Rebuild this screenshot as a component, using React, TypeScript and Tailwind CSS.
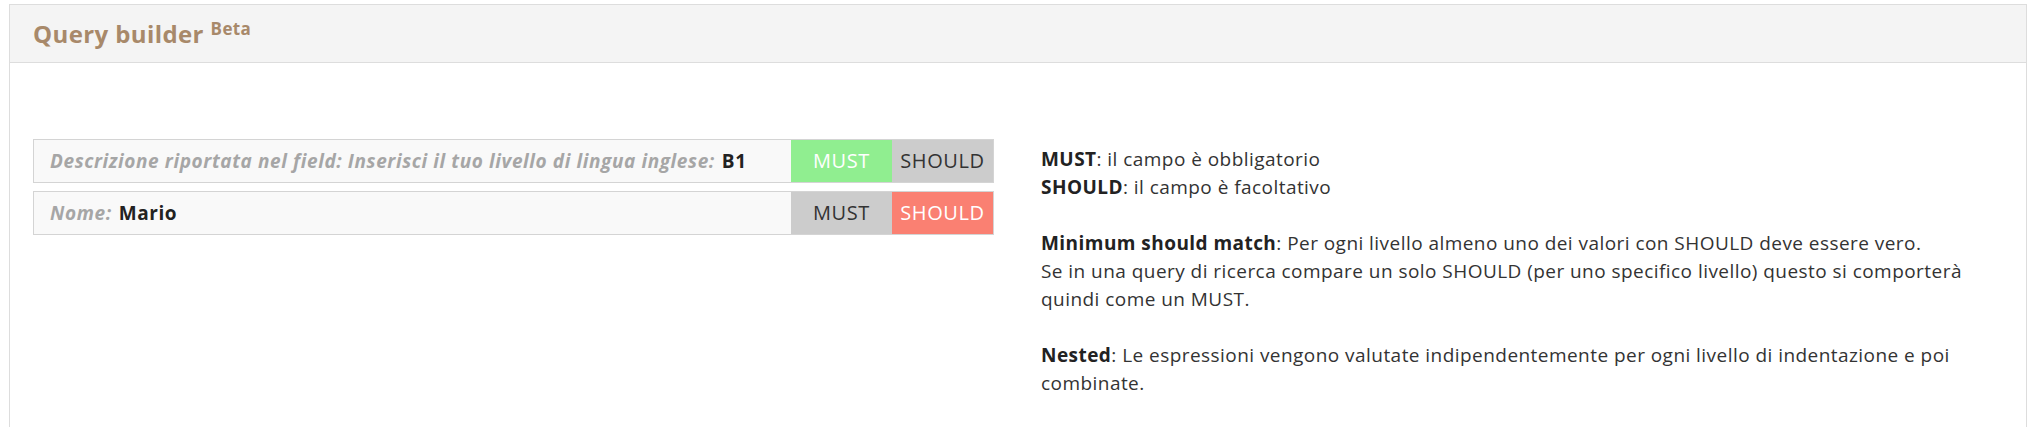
const font = { fontFamily: '"Open Sans", "Liberation Sans", sans-serif' };

type Rule = {
  label: string;
  value: string;
  mode: 'must' | 'should';
};

const rules: Rule[] = [
  {
    label: 'Descrizione riportata nel field: Inserisci il tuo livello di lingua inglese:',
    value: 'B1',
    mode: 'must',
  },
  { label: 'Nome:', value: 'Mario', mode: 'should' },
];

function RuleRow({ rule }: { rule: Rule }) {
  const must = rule.mode === 'must';
  return (
    <div className="flex h-[44px] border border-[#d4d4d4] bg-[#f9f9f9]">
      <div className="flex flex-1 items-center pl-[16px] text-[19px] tracking-[0.6px]">
        <span className="font-bold italic text-[#a6a6a6]">{rule.label}</span>
        <span className="ml-[7px] font-bold text-[#222]">{rule.value}</span>
      </div>
      <button
        className={
          must
            ? 'w-[101px] bg-[#90ee90] text-[20px] tracking-[0.6px] text-white'
            : 'w-[101px] bg-[#cccccc] text-[20px] tracking-[0.6px] text-[#333]'
        }
      >
        MUST
      </button>
      <button
        className={
          must
            ? 'w-[101px] bg-[#cccccc] text-[20px] tracking-[0.6px] text-[#333]'
            : 'w-[101px] bg-[#fa8072] text-[20px] tracking-[0.6px] text-white'
        }
      >
        SHOULD
      </button>
    </div>
  );
}

export default function App() {
  return (
    <div className="w-[2043px] h-[427px] overflow-hidden bg-white pt-[4px] pl-[9px]" style={font}>
      <div className="w-[2018px] h-[500px] border border-[#dddddd]">
        <div className="flex h-[58px] items-center border-b border-[#dddddd] bg-[#f4f4f4] px-[23px] pt-[1px]">
          <h3 className="text-[24px] tracking-[0.4px] font-bold text-[#a8896a] leading-none">
            Query builder <sup className="text-[17px]">Beta</sup>
          </h3>
        </div>

        <div className="grid grid-cols-2">
          <section className="flex flex-col gap-[8px] pl-[23px] pr-[24px] pt-[76px]">
            {rules.map((r) => (
              <RuleRow key={r.label} rule={r} />
            ))}
          </section>

          <section className="pl-[23px] pr-[23px] pt-[82px] text-[19px] tracking-[0.45px] leading-[28px] text-[#333]">
            <p>
              <b className="text-[#222]">MUST</b>: il campo è obbligatorio
              <br />
              <b className="text-[#222]">SHOULD</b>: il campo è facoltativo
              <br />
              <br />
              <b className="text-[#222]">Minimum should match</b>: Per ogni livello almeno uno dei valori con SHOULD deve essere vero.
              <br />
              Se in una query di ricerca compare un solo SHOULD (per uno specifico livello) questo si comporterà quindi come un MUST.
              <br />
              <br />
              <b className="text-[#222]">Nested</b>: Le espressioni vengono valutate indipendentemente per ogni livello di indentazione e poi combinate.
            </p>
          </section>
        </div>
      </div>
    </div>
  );
}
